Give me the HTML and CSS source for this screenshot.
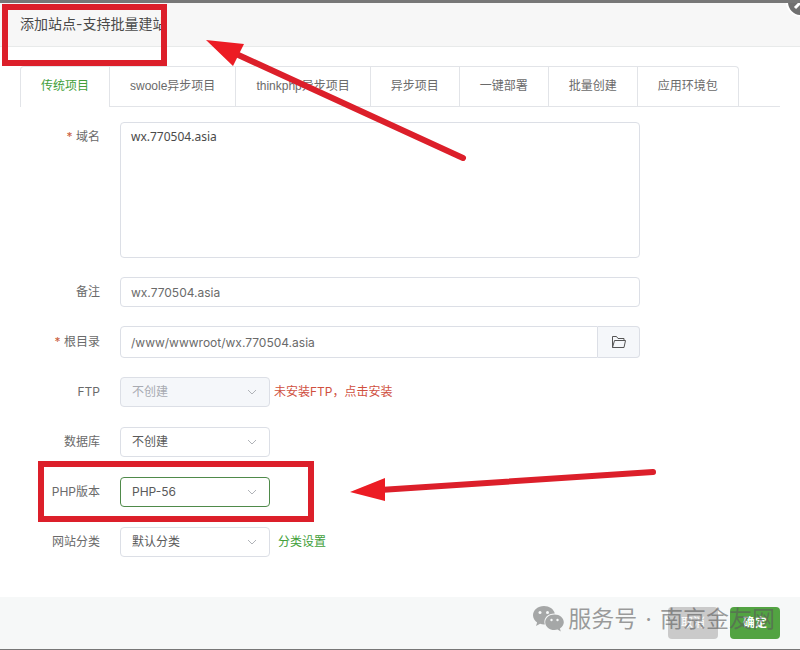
FILE: index.html
```html
<!DOCTYPE html>
<html lang="zh-CN">
<head>
    <meta charset="UTF-8">
    <meta name="viewport" content="width=device-width, initial-scale=1.0">
    <title>添加站点</title>
    <link rel="stylesheet" href="styles.css">
</head>
<body>
    <div class="dialog">
        <header class="dialog-header">
            <h1 class="dialog-title">添加站点-支持批量建站</h1>
        </header>
        <button class="close-button" type="button" aria-label="关闭">
            <svg width="30" height="30" viewBox="0 0 30 30">
                <circle cx="15" cy="15" r="14" fill="#707070" stroke="#fff" stroke-width="2"/>
                <path d="M9 9l12 12M21 9L9 21" stroke="#fff" stroke-width="3"/>
            </svg>
        </button>

        <nav class="tabs">
            <button class="tab active" type="button">传统项目</button>
            <button class="tab" type="button">swoole异步项目</button>
            <button class="tab" type="button">thinkphp异步项目</button>
            <button class="tab" type="button">异步项目</button>
            <button class="tab" type="button">一键部署</button>
            <button class="tab" type="button">批量创建</button>
            <button class="tab" type="button">应用环境包</button>
        </nav>

        <form class="site-form" id="site-form">
            <div class="row row-top">
                <label class="label" for="domain"><span class="required">*</span> 域名</label>
                <textarea class="field domain" id="domain">wx.770504.asia</textarea>
            </div>
            <div class="row">
                <label class="label" for="remark">备注</label>
                <input class="field" id="remark" type="text" value="wx.770504.asia">
            </div>
            <div class="row">
                <label class="label" for="path"><span class="required">*</span> 根目录</label>
                <div class="field-group">
                    <input class="field" id="path" type="text" value="/www/wwwroot/wx.770504.asia">
                    <button class="folder-button" type="button" aria-label="选择目录">
                        <svg width="16" height="14" viewBox="0 0 16 14" fill="none" stroke="#555" stroke-width="1">
                            <path d="M1.500 12.500v-11h4l1.500 2h6v2M1.500 12.500l2-7h11l-1.500 7z"/>
                        </svg>
                    </button>
                </div>
            </div>
            <div class="row">
                <label class="label" for="ftp">FTP</label>
                <div class="select-box">
                    <select class="select" id="ftp" disabled><option>不创建</option></select>
                    <svg class="arrow" width="10" height="6" viewBox="0 0 10 6"><path d="M1 1l4 4 4-4"/></svg>
                </div>
                <a class="hint hint-error" href="#">未安装FTP，点击安装</a>
            </div>
            <div class="row">
                <label class="label" for="database">数据库</label>
                <div class="select-box">
                    <select class="select" id="database"><option>不创建</option></select>
                    <svg class="arrow" width="10" height="6" viewBox="0 0 10 6"><path d="M1 1l4 4 4-4"/></svg>
                </div>
            </div>
            <div class="row">
                <label class="label" for="php">PHP版本</label>
                <div class="select-box">
                    <select class="select select-focus" id="php"><option>PHP-56</option></select>
                    <svg class="arrow" width="10" height="6" viewBox="0 0 10 6"><path d="M1 1l4 4 4-4"/></svg>
                </div>
            </div>
            <div class="row">
                <label class="label" for="category">网站分类</label>
                <div class="select-box">
                    <select class="select" id="category"><option>默认分类</option></select>
                    <svg class="arrow" width="10" height="6" viewBox="0 0 10 6"><path d="M1 1l4 4 4-4"/></svg>
                </div>
                <a class="hint hint-link" href="#">分类设置</a>
            </div>
        </form>

        <footer class="dialog-footer">
            <button class="button" type="button">取消</button>
            <button class="button button-primary" type="submit" form="site-form">确定</button>
            <div class="watermark">
                <svg width="31" height="26" viewBox="0 0 31 26">
                    <path fill="#a5a7a7" d="M11 0C4.900 0 0 4.200 0 9.300c0 2.900 1.600 5.400 4.100 7.100L3 20l4.100-2.200c1.200.4 2.500.6 3.900.6h.8c-2-6.500 3.500-11.200 10-11C20.700 3 16.300 0 11 0z"/>
                    <path fill="#a5a7a7" d="M21.500 8.500c-5.300 0-9.300 3.500-9.300 7.800s4 7.800 9.300 7.800c1.100 0 2.100-.2 3.100-.5l3.200 1.900-.9-3c2.300-1.400 3.900-3.700 3.900-6.200 0-4.300-4-7.800-9.300-7.800z"/>
                    <g fill="#f6f8f8">
                        <circle cx="7" cy="6.500" r="1.500"/>
                        <circle cx="14.500" cy="6.500" r="1.500"/>
                        <circle cx="18.500" cy="14" r="1.200"/>
                        <circle cx="24.500" cy="14" r="1.200"/>
                    </g>
                </svg>
                <span>服务号</span>
                <span>·</span>
                <span>南京金友网</span>
            </div>
        </footer>

        <!-- red marks over the form -->
        <svg class="marks" width="800" height="650" viewBox="0 0 800 650">
            <g fill="none" stroke="#dc1f2a" stroke-width="6">
                <rect x="5" y="7" width="159" height="56"/>
                <rect x="41" y="464" width="270" height="55"/>
                <path d="M234 53L463 158" stroke-linecap="round"/>
                <path d="M380 490L653 472" stroke-linecap="round"/>
            </g>
            <path fill="#ec1c24" d="M206 40l38 4-11 22zM350 492l35-14v23z"/>
        </svg>
    </div>
</body>
</html>
```
FILE: styles.css
```css
* {
    box-sizing: border-box;
}
body {
    margin: 0;
    font-family: Inter, "Noto Sans CJK SC", sans-serif;
    font-size: 12px;
    line-height: 16px;
    color: #6a6a6a;
    background-color: #fff;
}
button, input, select, textarea {
    font: inherit;
    color: inherit;
}
a {
    text-decoration: none;
}
.dialog {
    position: relative;
    display: flex;
    flex-direction: column;
    min-height: 100vh;
    border-top: 3px solid #777;
    border-bottom: 1px solid #777;
    overflow: hidden;
}
.dialog-header {
    height: 44px;
    padding: 0 20px;
    background-color: #f7f7f7;
    border-bottom: 1px solid #e8eaea;
}
.dialog-title {
    margin: 0;
    font-size: 14px;
    font-weight: normal;
    line-height: 42px;
    color: #4a4a4a;
}
.close-button {
    position: absolute;
    top: -16px;
    right: -16px;
    width: 30px;
    height: 30px;
    padding: 0;
    border: none;
    background: none;
    cursor: pointer;
}
.close-button svg {
    display: block;
}
.tabs {
    display: flex;
    margin: 19px 20px 15px;
    border-bottom: 1px solid #e2e4e8;
    font-family: "Liberation Sans", "Noto Sans CJK SC", sans-serif;
}
.tab {
    height: 40px;
    padding: 0 20px 2px;
    border: solid #e2e4e8;
    border-width: 1px 1px 0 0;
    background: none;
    white-space: nowrap;
    cursor: pointer;
}
.tab:first-child {
    border-left-width: 1px;
    border-top-left-radius: 4px;
}
.tab:last-child {
    border-top-right-radius: 4px;
}
.tab.active {
    margin-bottom: -1px;
    height: 41px;
    padding-bottom: 3px;
    background-color: #fff;
    color: #42a03a;
}
.site-form {
    display: flex;
    flex-direction: column;
    gap: 20px;
    padding: 0 20px;
}
.row {
    display: flex;
    align-items: center;
    height: 30px;
}
.row-top {
    align-items: flex-start;
    height: 135px;
}
.label {
    width: 80px;
    margin-right: 20px;
    line-height: 30px;
    text-align: right;
}
.required {
    color: #c9603c;
}
.field {
    width: 100%;
    max-width: 520px;
    height: 30px;
    padding: 0 10px;
    border: 1px solid #dcdfe6;
    border-radius: 4px;
    background-color: #fff;
}
.domain {
    height: 136px;
    padding: 5px 10px;
    font-family: "Noto Sans", "Noto Sans CJK SC", sans-serif;
    line-height: 18px;
    color: #4a4a4a;
    resize: none;
}
.field-group {
    display: flex;
    width: 100%;
    max-width: 520px;
    height: 32px;
}
.field-group .field {
    height: 32px;
    border-radius: 4px 0 0 4px;
}
.folder-button {
    display: flex;
    flex: none;
    align-items: center;
    justify-content: center;
    width: 42px;
    border: 1px solid #dcdfe6;
    border-left: none;
    border-radius: 0 4px 4px 0;
    background-color: #f5f7fa;
    cursor: pointer;
}
.select-box {
    display: grid;
    align-items: center;
    width: 150px;
}
.select-box > * {
    grid-area: 1 / 1;
}
.select {
    width: 100%;
    height: 30px;
    padding: 0 30px 0 11px;
    border: 1px solid #dcdfe6;
    border-radius: 4px;
    background-color: #fff;
    color: #5a5a5a;
    appearance: none;
}
.select:disabled {
    background-color: #f5f7fa;
    color: #a8abb2;
    opacity: 1;
}
.select-focus {
    border-color: #4f8a4a;
}
.arrow {
    justify-self: end;
    margin-right: 13px;
    fill: none;
    stroke: #b0b3b8;
    pointer-events: none;
}
.hint {
    margin-left: 8px;
    line-height: 30px;
}
.hint-error {
    margin-left: 4px;
    color: #d0503f;
}
.hint-link {
    color: #42a03a;
}
.dialog-footer {
    position: relative;
    display: flex;
    justify-content: flex-end;
    gap: 12px;
    margin-top: auto;
    padding: 10px 20px;
    background-color: #f6f8f8;
}
.button {
    width: 50px;
    height: 32px;
    padding: 0;
    border: none;
    border-radius: 4px;
    background-color: #cacaca;
    color: #fff;
    cursor: pointer;
}
.button-primary {
    background-color: #52a342;
    font-weight: bold;
}
.watermark {
    position: absolute;
    top: 5px;
    right: 25px;
    display: flex;
    align-items: center;
    gap: 8px;
    font-size: 23px;
    line-height: 34px;
    white-space: nowrap;
    color: rgba(90, 90, 90, 0.6);
    pointer-events: none;
}
.watermark svg {
    margin-right: -4px;
}
.marks {
    position: absolute;
    top: -3px;
    left: 0;
    pointer-events: none;
}
```
